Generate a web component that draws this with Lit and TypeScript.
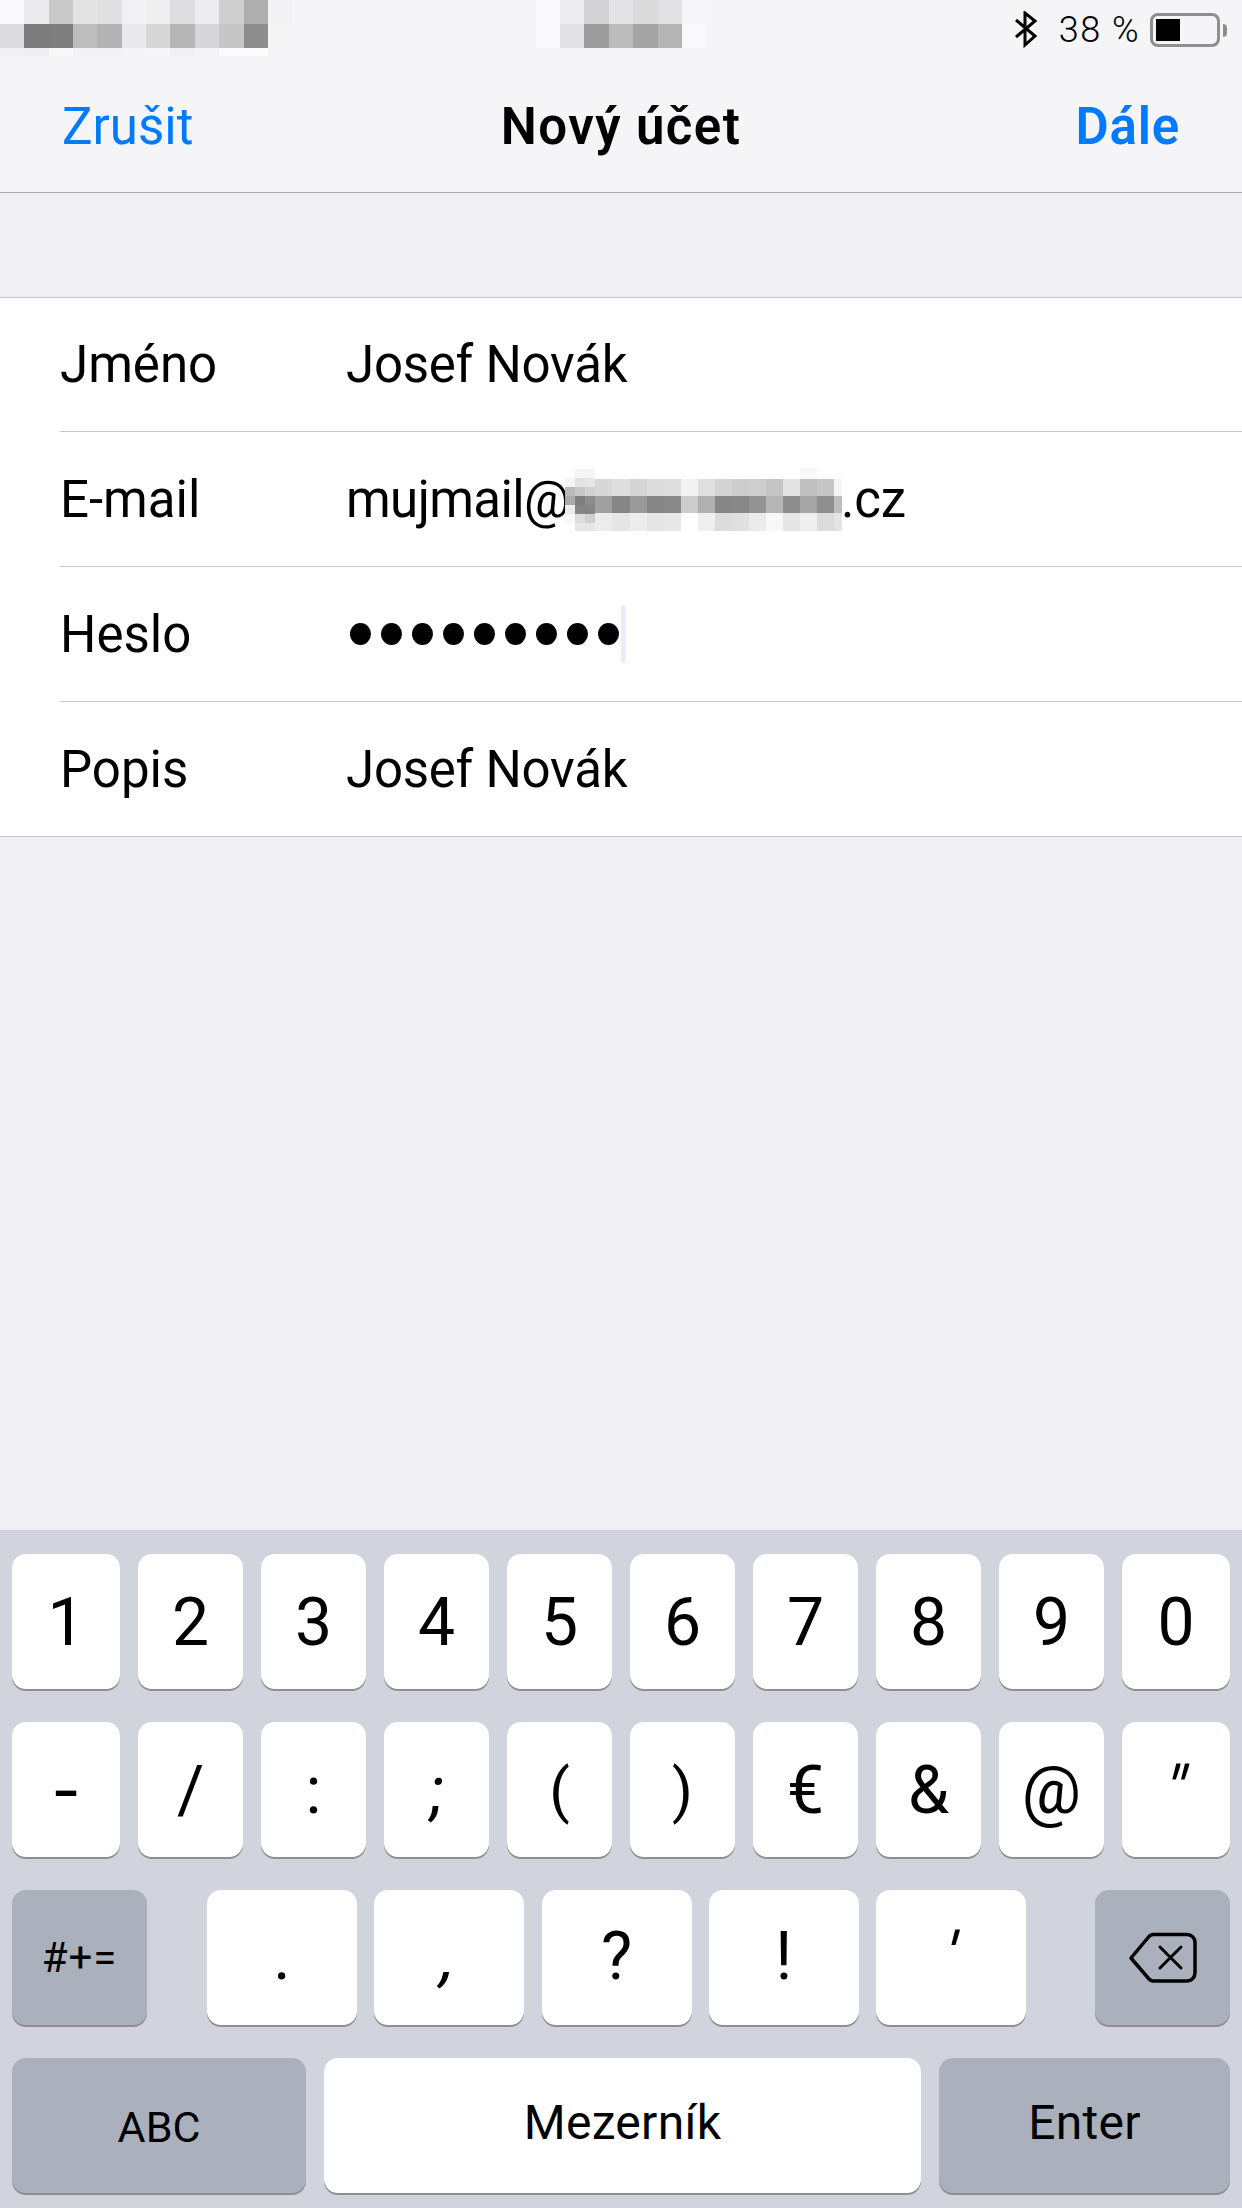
import { LitElement, html, css, svg } from 'lit';
import { customElement, property } from 'lit/decorators.js';

// gray values of the blurred-out blocks: [x, y, w, h, colour]
type Block = [number, number, number, number, string];

function gridBlocks(xs: number[], ys: number[], rows: string[][]): Block[] {
  const out: Block[] = [];
  rows.forEach((row, r) => {
    row.forEach((c, i) => {
      out.push([xs[i], ys[r], xs[i + 1] - xs[i], ys[r + 1] - ys[r], c]);
    });
  });
  return out;
}

const statusLeft = gridBlocks(
  [0, 24, 49, 73, 97, 122, 146, 170, 195, 219, 244, 268, 292],
  [0, 24, 48, 56],
  [
    ['fafafc', 'ebebed', 'c9c9c9', 'e3e3e3', 'e0e0e0', 'f2f2f4', 'efefef', 'dedee0', 'ececee', 'cfcfcf', 'aeaeae', 'f2f2f4'],
    ['dcdcde', '7c7c7c', '7e7e7e', 'bdbdbd', 'b2b2b2', 'e9e9eb', 'd6d6d6', 'b6b6b6', 'd6d6d8', 'c6c6c6', '8e8e8e', 'f5f5f5'],
    ['f1f1f3', 'eeeef0', 'f8f8f8', 'f3f3f5', 'f2f2f4', 'f5f5f7', 'f6f6f8', 'f1f1f3', 'f4f4f6', 'fbfbfd', 'fcfcfe', 'f5f5f8'],
  ],
);

const statusMid = gridBlocks(
  [0, 24, 48, 73, 97, 122, 146, 170],
  [0, 24, 48],
  [
    ['f9f9fb', 'ececee', 'd3d3d5', 'e4e4e6', 'dadada', 'e1e1e3', 'f6f6f8'],
    ['fafafc', 'e2e2e4', '9d9d9d', 'bcbcbc', 'a3a3a3', 'b4b4b4', 'f9f9fb'],
  ],
);

const emailBlur: Block[] = [
  ...gridBlocks(
    [30, 47, 65, 82, 99, 116, 133, 150, 167, 184, 201, 218, 235, 252, 269, 277],
    [14, 31, 48, 66],
    [
      ['d7d7d7', 'dedede', 'd5d5d5', 'dcdcdc', 'dddddd', 'f2f2f2', 'dfdfdf', 'd3d3d3', 'cdcdcd', 'cecece', 'c6c6c6', 'e3e3e3', 'c0c0c0', 'c6c6c6', 'f5f5f5'],
      ['a0a0a0', '858585', '9a9a9a', '858585', '8a8a8a', 'cccccc', 'b0b0b0', '868686', '888888', '939393', 'b6b6b6', '8e8e8e', 'a5a5a5', '8f8f8f', 'bdbdbd'],
      ['ececec', 'e6e6e6', 'ededed', 'e6e6e6', 'e8e8e8', 'ffffff', 'eeeeee', 'dcdcdc', 'e0e0e0', 'ebebeb', 'f8f8f8', 'e6e6e6', 'efefef', 'dcdcdc', 'e4e4e4'],
    ],
  ),
  ...gridBlocks(
    [0, 10, 20, 30],
    [4, 13, 22, 31, 40, 49, 58, 66],
    [
      ['ffffff', 'f5f5f5', 'f5f5f5'],
      ['f5f5f5', 'e3e3e3', 'e6e6e6'],
      ['bbbbbb', 'c8c8c8', 'd2d2d2'],
      ['aaaaaa', '7f7f7f', '8c8c8c'],
      ['ececec', '858585', '858585'],
      ['f8f8f8', 'dcdcdc', 'cfcfcf'],
      ['ffffff', 'e6e6e6', 'e6e6e6'],
    ],
  ),
  [235, 2, 17, 12, 'f8f8f8'],
];

const row1 = ['1', '2', '3', '4', '5', '6', '7', '8', '9', '0'];
const row2 = ['-', '/', ':', ';', '(', ')', '€', '&', '@', '″'];
const row3 = ['.', ',', '?', '!', '′'];

const glyphClass: Record<string, string> = {
  '-': 'wide',
  '(': 'paren',
  ')': 'paren',
  ',': 'slant',
  ';': 'slant-soft',
  '″': 'slant',
  '′': 'slant',
};

const glyph = (k: string) => html`<span class=${glyphClass[k] ?? ''}>${k}</span>`;

@customElement('blur-patch')
export class BlurPatch extends LitElement {
  static styles = css`
    :host {
      position: absolute;
      display: block;
      line-height: 0;
    }
  `;

  @property({ attribute: false }) blocks: Block[] = [];

  render() {
    const w = Math.max(...this.blocks.map((b) => b[0] + b[2]));
    const h = Math.max(...this.blocks.map((b) => b[1] + b[3]));
    return html`<svg width=${w} height=${h} viewBox="0 0 ${w} ${h}" shape-rendering="crispEdges">
      ${this.blocks.map((b) => svg`<rect x=${b[0]} y=${b[1]} width=${b[2]} height=${b[3]} fill="#${b[4]}"></rect>`)}
    </svg>`;
  }
}

@customElement('app-root')
export class AppRoot extends LitElement {
  static styles = css`
    :host {
      display: flex;
      flex-direction: column;
      width: 1242px;
      height: 2208px;
      background: #efeff4;
      font-family: Roboto, 'Liberation Sans', sans-serif;
      color: #000;
      overflow: hidden;
    }

    .header {
      background: #f5f5f8;
      border-bottom: 1px solid #a9a9ae;
    }

    .status {
      position: relative;
      height: 60px;
      display: flex;
      justify-content: flex-end;
      align-items: center;
      padding-right: 15px;
    }

    .patch-left {
      left: 0;
      top: 0;
    }

    .patch-mid {
      left: 536px;
      top: 0;
    }

    .bt {
      margin-right: 21px;
    }

    .percent {
      font-size: 36px;
      font-weight: 300;
      letter-spacing: 1.5px;
      margin-right: 10px;
    }

    .battery {
      display: flex;
      align-items: center;
      gap: 3px;
    }

    .battery-body {
      box-sizing: border-box;
      width: 70px;
      height: 34px;
      border: 3px solid #8e8e8e;
      border-radius: 8px;
      padding: 3px;
    }

    .battery-fill {
      width: 24px;
      height: 100%;
      background: #000;
    }

    .battery-nub {
      width: 4px;
      height: 13px;
      background: #8e8e8e;
      border-radius: 0 4px 4px 0;
    }

    .nav {
      height: 132px;
      display: grid;
      grid-template-columns: 1fr auto 1fr;
      align-items: center;
      padding: 0 62px;
      font-size: 51px;
    }

    .cancel {
      color: #007aff;
    }

    .title {
      font-weight: 600;
      letter-spacing: 1.4px;
    }

    .next {
      color: #007aff;
      font-weight: 600;
      letter-spacing: 0.8px;
      text-align: right;
    }

    .form {
      margin-top: 104px;
      background: #fff;
      border-top: 1px solid #c8c7cc;
      border-bottom: 1px solid #c8c7cc;
      padding-left: 60px;
      font-size: 51px;
    }

    .field {
      position: relative;
      display: flex;
      align-items: center;
      box-sizing: border-box;
      height: 135px;
      border-bottom: 1px solid #c8c7cc;
    }

    .field:first-child {
      height: 134px;
    }

    .field:last-child {
      border-bottom: 0;
      height: 134px;
    }

    .label {
      width: 286px;
    }

    .value {
      letter-spacing: -0.25px;
    }

    .mail {
      width: 495px;
      letter-spacing: -0.6px;
    }

    .patch-email {
      left: 505px;
      top: 33px;
    }

    .dots {
      display: flex;
      align-items: center;
      gap: 10px;
      padding-left: 4px;
    }

    .dot {
      width: 21px;
      height: 22px;
      border-radius: 50%;
      background: #000;
    }

    .caret {
      width: 5px;
      height: 58px;
      margin-left: -8px;
      border-radius: 3px;
      background: #e9ecfb;
    }

    .keyboard {
      margin-top: auto;
      height: 678px;
      box-sizing: border-box;
      background: #d1d4dc;
      padding: 24px 12px 0;
      display: flex;
      flex-direction: column;
      gap: 33px;
    }

    .row {
      display: flex;
      gap: 18px;
    }

    .row.mid-row {
      gap: 0;
    }

    .key {
      flex: 1;
      box-sizing: border-box;
      height: 135px;
      background: #fff;
      border-radius: 14px;
      box-shadow: 0 2px 0 #8e8e93;
      display: flex;
      align-items: center;
      justify-content: center;
      font-size: 66px;
    }

    .row.top .key {
      padding-top: 2px;
    }

    .row > .key:first-child:not(.dark),
    .row > .key:last-child:not(.dark) {
      flex: 0 0 108px;
    }

    .dark {
      background: #abb1bc;
    }

    .side {
      flex: 0 0 135px;
    }

    .punct {
      flex: 1;
      display: flex;
      justify-content: space-between;
      padding: 0 69px 0 60px;
    }

    .punct .key {
      flex: 0 0 150px;
      padding-bottom: 2px;
    }

    .wide {
      display: inline-block;
      transform: scale(1.3, 1.1);
    }

    .paren {
      font-size: 60px;
    }

    .slant {
      display: inline-block;
      transform: skewX(-14deg);
    }

    .slant-soft {
      display: inline-block;
      transform: skewX(-7deg);
    }

    .symbols {
      font-size: 42px;
      letter-spacing: 1px;
    }

    .abc {
      flex: 0 0 294px;
      font-size: 43px;
      padding-top: 3px;
    }

    .space {
      flex: 1;
      font-size: 48px;
      letter-spacing: 0.3px;
      padding-bottom: 6px;
    }

    .enter {
      flex: 0 0 291px;
      font-size: 48px;
      letter-spacing: 0.3px;
      padding-bottom: 6px;
    }
  `;

  render() {
    return html`
      <div class="header">
        <div class="status">
          <blur-patch class="patch-left" .blocks=${statusLeft}></blur-patch>
          <blur-patch class="patch-mid" .blocks=${statusMid}></blur-patch>
          <svg class="bt" width="24" height="38" viewBox="0 0 24 38" fill="none" stroke="#000" stroke-width="3">
            <path d="M2 9 L21 25 L11 34 V2 L21 10 L2 26"></path>
          </svg>
          <span class="percent">38 %</span>
          <div class="battery">
            <div class="battery-body"><div class="battery-fill"></div></div>
            <div class="battery-nub"></div>
          </div>
        </div>
        <div class="nav">
          <span class="cancel">Zrušit</span>
          <span class="title">Nový účet</span>
          <span class="next">Dále</span>
        </div>
      </div>

      <div class="form">
        <div class="field"><span class="label">Jméno</span><span class="value">Josef Novák</span></div>
        <div class="field">
          <span class="label">E-mail</span><span class="value mail">mujmail@</span>
          <blur-patch class="patch-email" .blocks=${emailBlur}></blur-patch>
          <span class="value">.cz</span>
        </div>
        <div class="field">
          <span class="label">Heslo</span>
          <div class="dots">${Array.from({ length: 9 }, () => html`<div class="dot"></div>`)}<div class="caret"></div></div>
        </div>
        <div class="field"><span class="label">Popis</span><span class="value">Josef Novák</span></div>
      </div>

      <div class="keyboard">
        <div class="row top">${row1.map((k) => html`<div class="key">${glyph(k)}</div>`)}</div>
        <div class="row top">${row2.map((k) => html`<div class="key">${glyph(k)}</div>`)}</div>
        <div class="row mid-row">
          <div class="key dark side symbols">#+=</div>
          <div class="punct">${row3.map((k) => html`<div class="key">${glyph(k)}</div>`)}</div>
          <div class="key dark side">
            <svg width="76" height="58" viewBox="0 0 76 58" fill="none" stroke="#000" stroke-width="3.5" stroke-linejoin="round" stroke-linecap="round">
              <path d="M28 5.5 H62 a8 8 0 0 1 8 8 V44 a8 8 0 0 1 -8 8 H28 a6 6 0 0 1 -4 -2 L6 29 L24 7.5 a6 6 0 0 1 4 -2 Z"></path>
              <path d="M35 18 L56 39 M56 18 L35 39" stroke-width="3"></path>
            </svg>
          </div>
        </div>
        <div class="row">
          <div class="key dark abc">ABC</div>
          <div class="key space">Mezerník</div>
          <div class="key dark enter">Enter</div>
        </div>
      </div>
    `;
  }
}
